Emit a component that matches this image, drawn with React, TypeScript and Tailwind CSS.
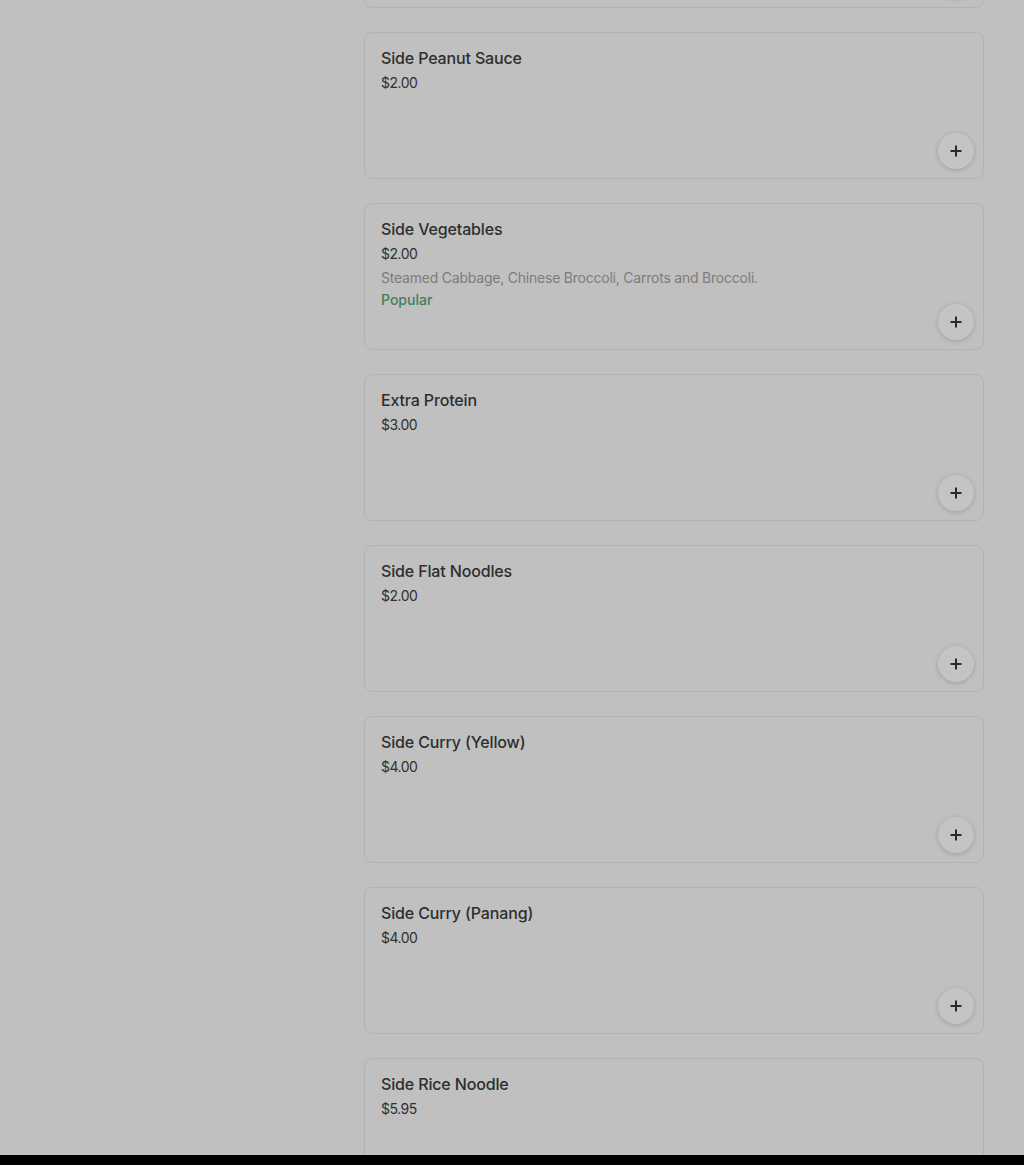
import React from "react";

type Item = { name: string; price: string; desc?: string; popular?: boolean };

const items: Item[] = [
  { name: "Side Peanut Sauce", price: "$2.00" },
  {
    name: "Side Vegetables",
    price: "$2.00",
    desc: "Steamed Cabbage, Chinese Broccoli, Carrots and Broccoli.",
    popular: true,
  },
  { name: "Extra Protein", price: "$3.00" },
  { name: "Side Flat Noodles", price: "$2.00" },
  { name: "Side Curry (Yellow)", price: "$4.00" },
  { name: "Side Curry (Panang)", price: "$4.00" },
  { name: "Side Rice Noodle", price: "$5.95" },
];

function PlusButton() {
  return (
    <div className="absolute right-[9px] bottom-[9px] w-9 h-9 rounded-full bg-[#c4c4c4] shadow-[0_1px_5px_rgba(0,0,0,0.18)] flex items-center justify-center">
      <svg width="12" height="12" viewBox="0 0 12 12">
        <path d="M6 0.5v11M0.5 6h11" stroke="#2a2a2a" strokeWidth="2" />
      </svg>
    </div>
  );
}

function Card({ item }: { item?: Item }) {
  return (
    <div className="relative h-[147px] shrink-0 rounded-[8px] border border-[#b3b3b3] px-4 pt-[15px]">
      {item && (
        <>
          <div className="text-[16px] leading-[20px] font-medium text-[#2e2e2e] tracking-[-0.15px]">{item.name}</div>
          <div className="mt-[5px] text-[14px] leading-[20px] text-[#303030] tracking-[-0.5px]">{item.price}</div>
          {item.desc && (
            <div className="mt-[4px] text-[14px] leading-[20px] text-[#7c7c7c] tracking-[-0.22px]">{item.desc}</div>
          )}
          {item.popular && (
            <div className="mt-[2px] text-[14px] leading-[20px] font-medium text-[#3f7f5c]">Popular</div>
          )}
        </>
      )}
      <PlusButton />
    </div>
  );
}

export default function App() {
  return (
    <div
      className="w-[1024px] h-[1165px] flex flex-col overflow-hidden bg-black"
      style={{ fontFamily: "Inter, 'Noto Sans', sans-serif" }}
    >
      <div className="h-[1155px] overflow-hidden bg-[#c0c0c0] flex">
        <div className="w-[364px] shrink-0" />
        <div className="w-[620px] flex flex-col gap-6 -mt-[139px]">
          <Card />
          {items.map((it) => (
            <Card key={it.name} item={it} />
          ))}
        </div>
      </div>
      <div className="h-[10px] bg-black" />
    </div>
  );
}
